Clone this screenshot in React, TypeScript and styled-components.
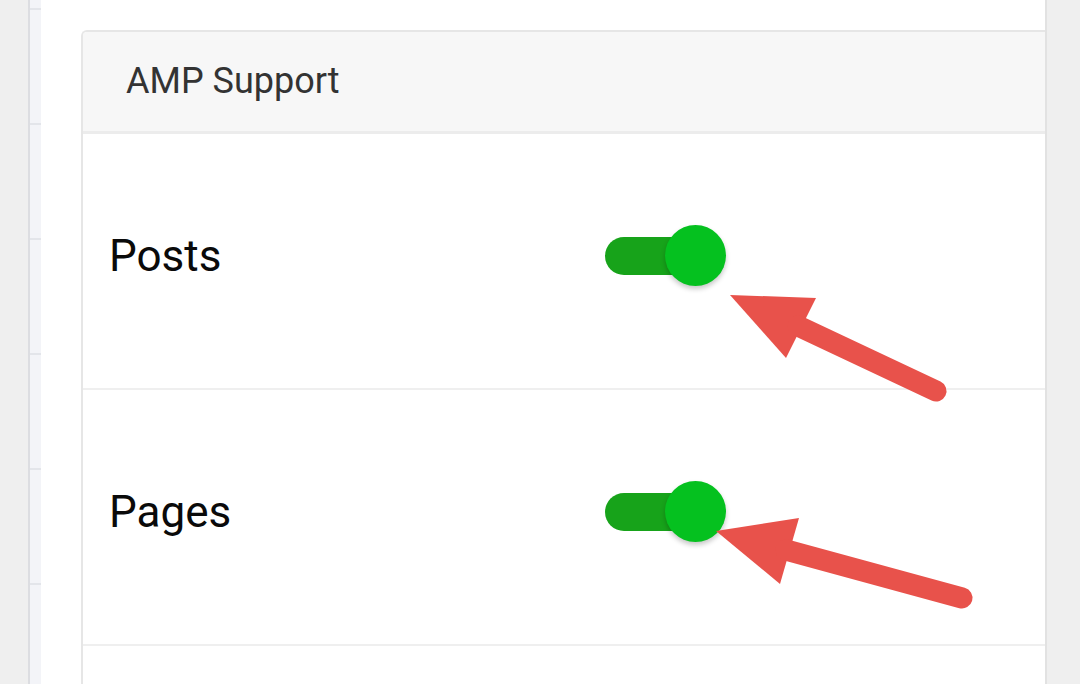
import React from "react";
import styled, { createGlobalStyle } from "styled-components";

const GlobalStyle = createGlobalStyle`
  html, body { margin: 0; padding: 0; background: #efefef; }
  body { font-family: Roboto, "Noto Sans", sans-serif; overflow: hidden; }
`;

const Page = styled.div`
  position: relative;
  display: flex;
  width: 1080px;
  height: 684px;
  overflow: hidden;
  background: #efefef;
`;

const Gutter = styled.div`
  width: 28px;
  flex: none;
  background: #efefef;
`;

const Strip = styled.div`
  width: 11px;
  flex: none;
  background: #f3f4f8;
  border-left: 2px solid #dcdde1;
  display: flex;
  flex-direction: column;
`;

const StripCell = styled.div<{ $first?: boolean }>`
  flex: none;
  height: ${(p) => (p.$first ? 8 : 113)}px;
  border-bottom: 2px solid #e3e5ea;
`;

const Main = styled.main`
  box-sizing: border-box;
  width: 1006px;
  flex: none;
  background: #ffffff;
  border-right: 2px solid #e2e2e2;
  padding: 30px 0 0 40px;
`;

const Card = styled.section`
  border-top: 2px solid #e6e6e6;
  border-left: 2px solid #e6e6e6;
  border-top-left-radius: 6px;
  overflow: hidden;
`;

const CardHeader = styled.header`
  box-sizing: border-box;
  height: 102px;
  display: flex;
  align-items: center;
  padding: 0 0 2px 43px;
  background: #f7f7f7;
  border-bottom: 3px solid #ececec;
  color: #333333;
  font-size: 36px;
  font-weight: 400;
`;

const Row = styled.div`
  box-sizing: border-box;
  height: 256px;
  display: flex;
  align-items: center;
  padding: 0 0 11px 26px;
  border-bottom: 2px solid #efefef;
`;

const Label = styled.span`
  width: 496px;
  flex: none;
  color: #0a0a0a;
  font-size: 44px;
  line-height: 1;
`;

const Toggle = styled.div`
  position: relative;
  width: 121px;
  height: 61px;
  flex: none;
  display: flex;
  align-items: center;
`;

const Track = styled.div<{ $on: boolean }>`
  width: 96px;
  height: 38px;
  border-radius: 19px;
  background: ${(p) => (p.$on ? "#17a31a" : "#bdbdbd")};
`;

const Knob = styled.div<{ $on: boolean }>`
  position: absolute;
  top: 0;
  ${(p) => (p.$on ? "right: 0;" : "left: 0;")}
  width: 61px;
  height: 61px;
  border-radius: 50%;
  background: ${(p) => (p.$on ? "#05c11f" : "#fafafa")};
  box-shadow: 0 3px 5px rgba(0, 0, 0, 0.22);
`;

const Overlay = styled.svg`
  position: absolute;
  left: 0;
  top: 0;
  width: 1080px;
  height: 684px;
  pointer-events: none;
`;

const Switch = ({ on }: { on: boolean }) => (
  <Toggle role="switch" aria-checked={on}>
    <Track $on={on} />
    <Knob $on={on} />
  </Toggle>
);

const ARROW = "#e8524b";

export default function App() {
  return (
    <>
      <GlobalStyle />
      <Page>
        <Gutter />
        <Strip>
          <StripCell $first />
          {[0, 1, 2, 3, 4, 5].map((i) => (
            <StripCell key={i} />
          ))}
        </Strip>
        <Main>
          <Card>
            <CardHeader>AMP Support</CardHeader>
            <Row>
              <Label>Posts</Label>
              <Switch on />
            </Row>
            <Row>
              <Label>Pages</Label>
              <Switch on />
            </Row>
            <Row />
          </Card>
        </Main>
        <Overlay viewBox="0 0 1080 684">
          <polygon points="730,295 816,298 786,358" fill={ARROW} strokeLinejoin="round" />
          <line x1="798" y1="326" x2="936" y2="391" stroke={ARROW} strokeWidth="21" strokeLinecap="round" />
          <polygon points="716,531 799,518 780,584" fill={ARROW} strokeLinejoin="round" />
          <line x1="786" y1="550" x2="962" y2="598" stroke={ARROW} strokeWidth="21" strokeLinecap="round" />
        </Overlay>
      </Page>
    </>
  );
}
